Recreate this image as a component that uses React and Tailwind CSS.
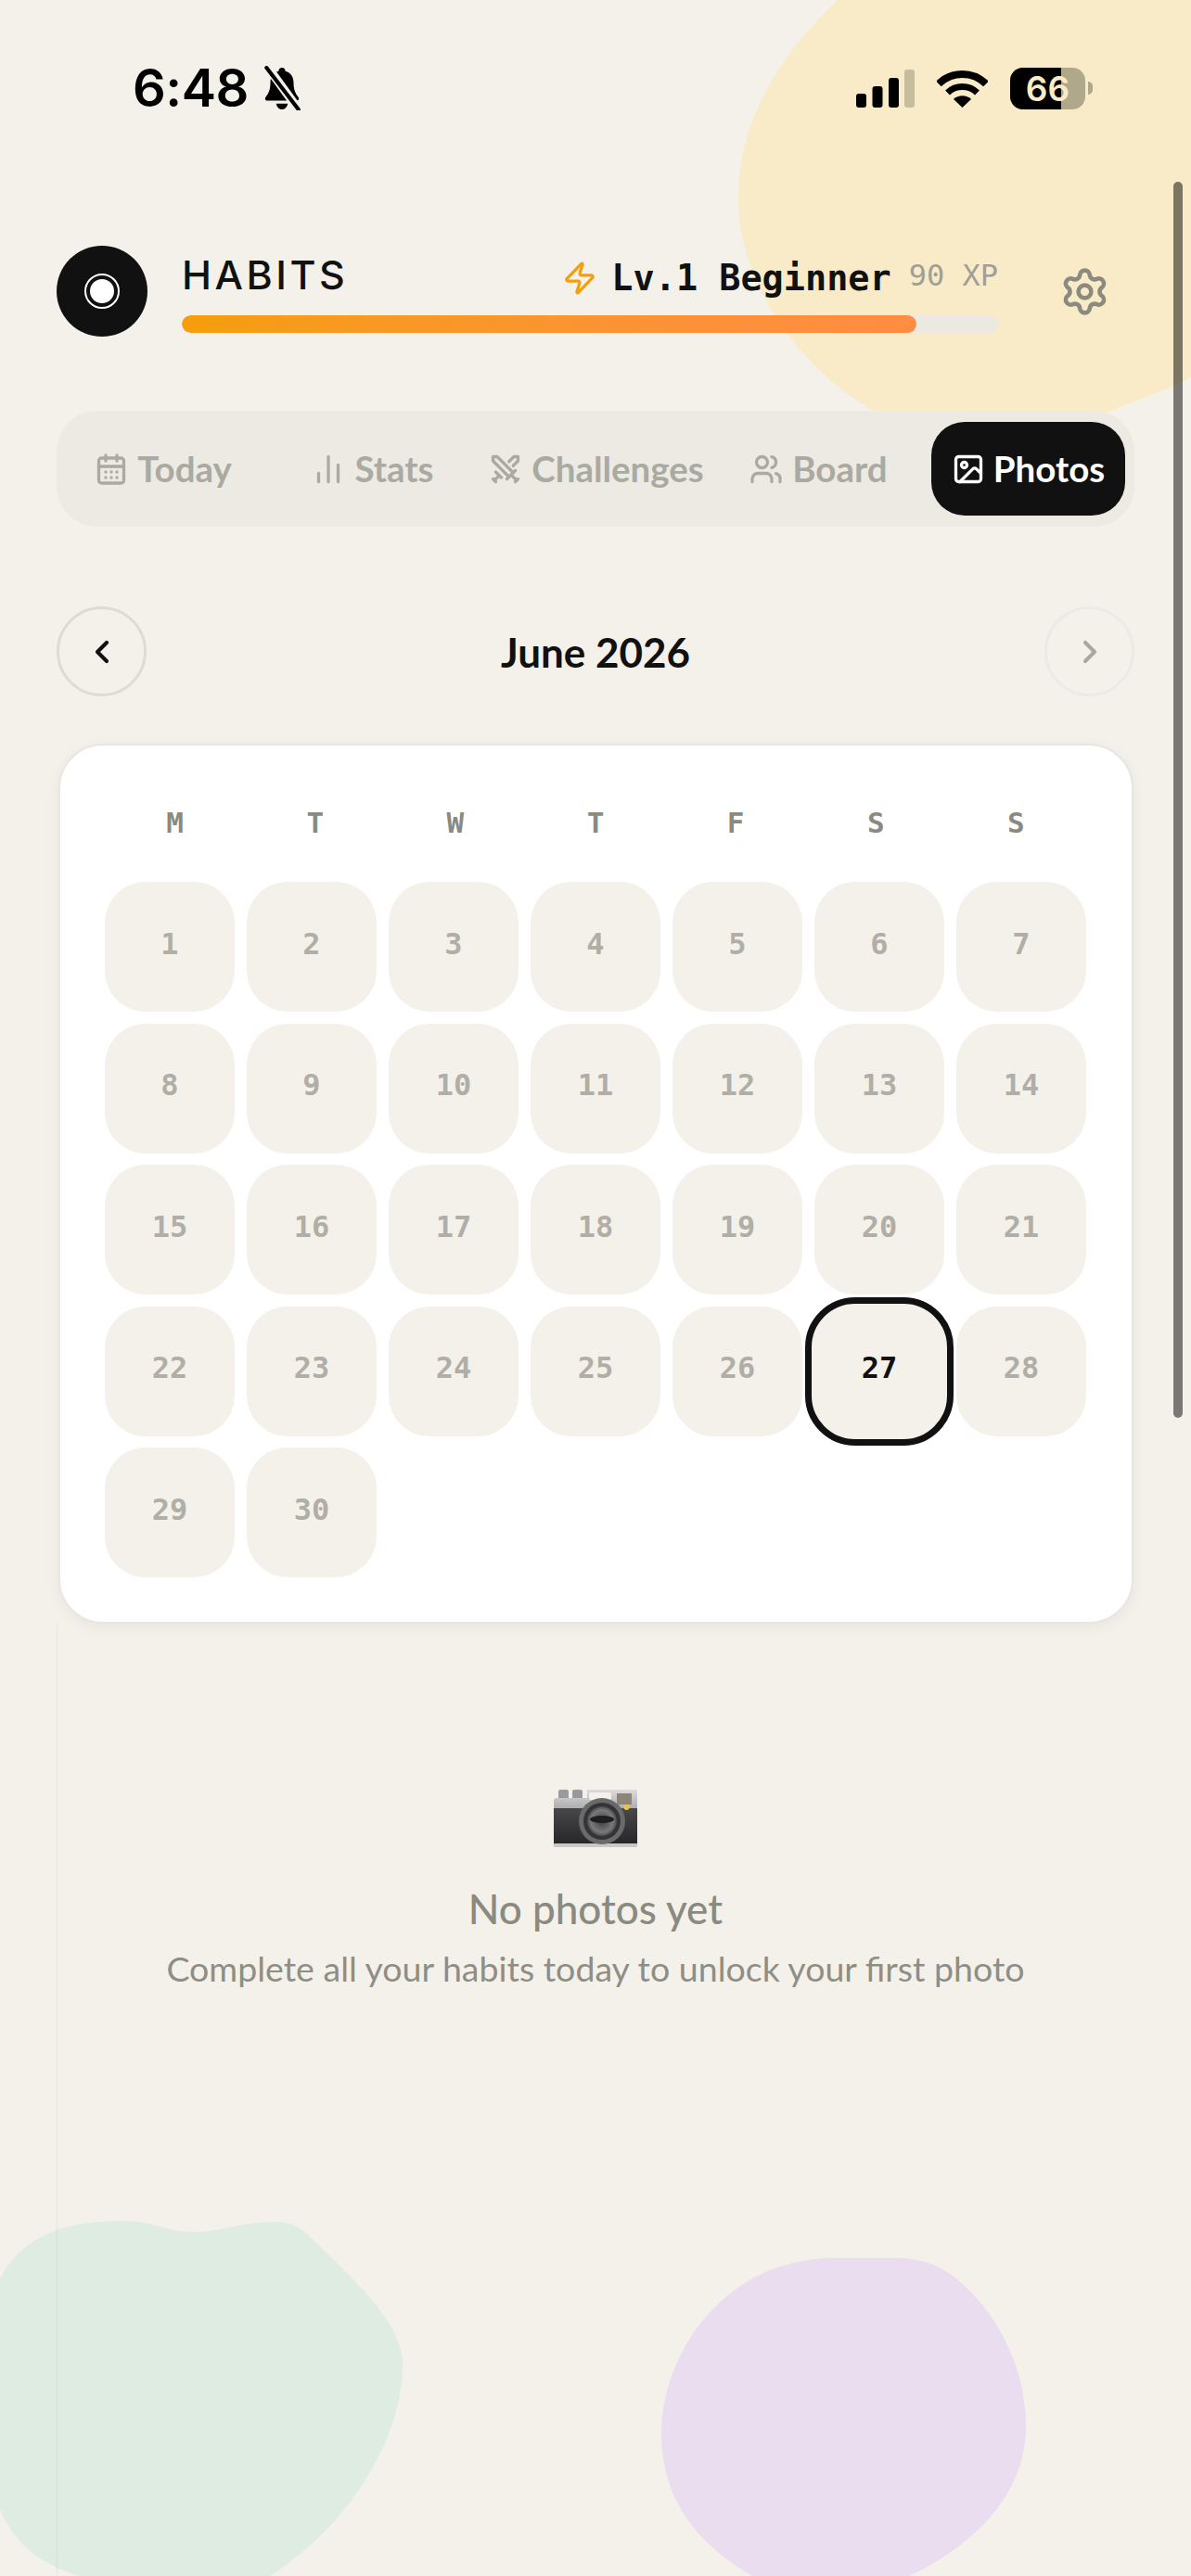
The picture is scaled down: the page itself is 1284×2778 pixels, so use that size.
import { CalendarDays, ChartNoAxesColumn, ChevronLeft, ChevronRight, Image, Settings, Swords, Users, Zap } from "lucide-react";

const nunito = "font-['Lato','Noto_Sans',sans-serif]";
const mono = "font-['DejaVu_Sans_Mono','Liberation_Mono',monospace]";

const tabs = [
  { label: "Today", icon: CalendarDays, width: "w-[206px]" },
  { label: "Stats", icon: ChartNoAxesColumn, width: "w-[246px]" },
  { label: "Challenges", icon: Swords, width: "w-[236px]" },
  { label: "Board", icon: Users, width: "w-[243px]" },
];

const weekdays = ["M", "T", "W", "T", "F", "S", "S"];
const days = Array.from({ length: 30 }, (_, i) => i + 1);

function BellOff() {
  return (
    <svg width="44" height="48" viewBox="0 0 42 46" fill="none">
      <path
        d="M21 2c2 0 3.500 1.500 3.500 3.500 6 1.500 8.500 6.500 8.500 12 0 6 1 10 5 15 1 1.500 0 3.500-2 3.500H6c-2 0-3-2-2-3.500 4-5 5-9 5-15 0-5.500 2.500-10.500 8.500-12C17.500 3.500 19 2 21 2z"
        fill="#000"
      />
      <path d="M15 39h12c-.5 3.500-3 6-6 6s-5.500-2.500-6-6z" fill="#000" />
      <path d="M6 1l32 44" stroke="#f4f1ea" strokeWidth="9" />
      <path d="M5 2l33 43" stroke="#000" strokeWidth="4" strokeLinecap="round" />
    </svg>
  );
}

function SignalIcon() {
  return (
    <svg width="63" height="41" viewBox="0 0 63 41">
      <rect x="0" y="26" width="11" height="15" rx="3" fill="#000" />
      <rect x="17.500" y="18" width="11" height="23" rx="3" fill="#000" />
      <rect x="35" y="9" width="11" height="32" rx="3" fill="#000" />
      <rect x="52" y="0" width="11" height="41" rx="3" fill="#c6bd9f" />
    </svg>
  );
}

function WifiIcon() {
  return (
    <svg width="55" height="41" viewBox="0 0 55 41" fill="none">
      <path d="M2 15.500a36 36 0 0 1 51 0" stroke="#000" strokeWidth="8" />
      <path d="M11.500 25a23 23 0 0 1 32 0" stroke="#000" strokeWidth="7" />
      <path d="M27.500 41L18 32a14 14 0 0 1 19 0z" fill="#000" />
    </svg>
  );
}

function BatteryIcon() {
  return (
    <div className="flex items-center gap-[3px]">
      <div className="relative flex h-[45px] w-[81px] overflow-hidden rounded-[14px] bg-[#b0a88a]">
        <div className="h-full w-[55px] bg-black" />
        <span className="absolute inset-0 flex items-center justify-center font-['Inter',sans-serif] text-[37px] font-semibold leading-none text-[#f9ebc8]">
          66
        </span>
      </div>
      <div className="h-[14px] w-[5px] rounded-r-full bg-[#b0a88a]" />
    </div>
  );
}

function CameraEmoji() {
  return (
    <svg width="90" height="63" viewBox="0 0 90 63">
      <defs>
        <linearGradient id="plate" x1="0" y1="0" x2="0" y2="1">
          <stop offset="0" stopColor="#dcdcde" />
          <stop offset="1" stopColor="#a9a9ad" />
        </linearGradient>
        <linearGradient id="body" x1="0" y1="0" x2="0" y2="1">
          <stop offset="0" stopColor="#48484a" />
          <stop offset="1" stopColor="#262628" />
        </linearGradient>
        <radialGradient id="lens" cx="0.5" cy="0.5" r="0.5">
          <stop offset="0" stopColor="#3c3c3e" />
          <stop offset="0.75" stopColor="#7a7a7c" />
          <stop offset="1" stopColor="#4b4b4d" />
        </radialGradient>
      </defs>
      <rect x="5" y="1" width="11" height="12" rx="2" fill="#9a9a9e" />
      <rect x="20" y="1" width="11" height="12" rx="2" fill="#9a9a9e" />
      <path d="M36 1h52a2 2 0 0 1 2 2v20H0v-10a3 3 0 0 1 3-3h33z" fill="url(#plate)" />
      <rect x="38" y="4" width="24" height="8" rx="2" fill="#f3f1e8" />
      <rect x="68" y="5" width="16" height="12" fill="#8d8578" />
      <rect x="0" y="21" width="90" height="39" fill="url(#body)" />
      <rect x="0" y="59" width="90" height="4" rx="1" fill="#c8c8ca" />
      <circle cx="78.500" cy="20" r="3" fill="#f4c430" />
      <circle cx="52" cy="35" r="25" fill="#6a6a6c" />
      <circle cx="52" cy="35" r="20" fill="#343436" />
      <circle cx="52" cy="35" r="16" fill="url(#lens)" />
      <ellipse cx="52" cy="33" rx="13" ry="4" fill="#1f1f21" />
    </svg>
  );
}

export default function App() {
  return (
    <div className={`relative h-[2778px] w-[1284px] overflow-hidden bg-[#f4f1ea] ${nunito}`}>
      {/* background blobs */}
      <svg className="absolute left-0 top-0" width="1284" height="2778" viewBox="0 0 1284 2778">
        <path
          d="M903 0C840 60 796 130 796 213C796 320 880 410 943 443C990 470 1140 470 1197 443C1230 430 1260 420 1284 407L1284 0Z"
          fill="#f9ebc8"
        />
        <path
          d="M0 2457C20 2418 60 2395 131 2395C165 2395 180 2407 209 2407C235 2407 265 2396 295 2396C312 2396 322 2400 334 2412C385 2462 434 2505 434 2550C434 2630 375 2725 291 2778L86 2778C40 2765 15 2740 0 2707Z"
          fill="#dfece2"
        />
        <path
          d="M713 2623C713 2540 780 2435 900 2435L960 2435C1000 2435 1020 2445 1045 2470C1085 2510 1106 2565 1106 2617C1106 2690 1050 2745 980 2778L811 2778C755 2745 713 2700 713 2623Z"
          fill="#eaddef"
        />
      </svg>

      {/* faint rail under the card */}
      <div className="absolute bottom-0 left-[60px] top-[1750px] w-[3px] bg-black/[0.02]" />

      <div className="relative">
        {/* status bar */}
        <div className="flex h-[190px] items-center justify-between pl-[143px] pr-[106px]">
          <div className="flex items-center gap-[14px]">
            <span className="font-['Inter',sans-serif] text-[56px] font-semibold leading-none tracking-[-0.500px] text-black">6:48</span>
            <BellOff />
          </div>
          <div className="flex items-center gap-[24px]">
            <SignalIcon />
            <WifiIcon />
            <BatteryIcon />
          </div>
        </div>

        {/* header */}
        <div className="mt-[75px] flex pl-[61px]">
          <div className="flex h-[98px] w-[98px] items-center justify-center rounded-full bg-[#111111]">
            <div className="flex h-[38px] w-[38px] items-center justify-center rounded-full border-2 border-white">
              <div className="h-[26px] w-[26px] rounded-full bg-white" />
            </div>
          </div>
          <div className="ml-[37px] w-[880px]">
            <div className="flex h-[75px] items-start justify-between">
              <span className="mt-[7px] font-['Inter',sans-serif] text-[43px] font-medium leading-[48px] tracking-[3.500px] text-[#111111]">HABITS</span>
              <div className={`flex items-center ${mono}`}>
                <Zap size={38} strokeWidth={2} className="mt-[13px] text-[#f59e0b]" />
                <span className="ml-[15px] mt-[13px] text-[38.500px] font-bold leading-[44px] text-[#111111]">Lv.1 Beginner</span>
                <span className="ml-[19px] mt-[6px] text-[32px] leading-[44px] text-[#a09f96]">90 XP</span>
              </div>
            </div>
            <div className="h-[19px] w-full overflow-hidden rounded-full bg-[#ece9e2]">
              <div className="h-full w-[792px] rounded-full bg-gradient-to-r from-[#f59e0b] to-[#ff8c42]" />
            </div>
          </div>
          <Settings size={55} strokeWidth={2} className="ml-[66px] mt-[22px] text-[#8a8a7e]" />
        </div>

        {/* tabs */}
        <div className="ml-[61px] mt-[80px] flex h-[125px] w-[1162px] items-center rounded-[44px] bg-[#edeae3] pl-[12px]">
          {tabs.map((tab) => (
            <div key={tab.label} className={`flex items-center justify-center gap-[10px] text-[#abaaa2] ${tab.width}`}>
              <tab.icon size={36} strokeWidth={2.200} />
              <span className="text-[38.500px] font-bold leading-none">{tab.label}</span>
            </div>
          ))}
          <div className="flex h-[101px] w-[209px] items-center justify-center gap-[9px] rounded-[36px] bg-[#111111] text-white">
            <Image size={36} strokeWidth={2.200} />
            <span className="text-[38.500px] font-bold leading-none">Photos</span>
          </div>
        </div>

        {/* month nav */}
        <div className="mt-[86px] flex items-center justify-between px-[61px]">
          <button className="flex h-[97px] w-[97px] items-center justify-center rounded-full border-[3px] border-[#dedbd5] text-[#111111]">
            <ChevronLeft size={40} strokeWidth={2.500} />
          </button>
          <span className="text-[44px] font-bold leading-none text-[#111111]">June 2026</span>
          <button className="flex h-[97px] w-[97px] items-center justify-center rounded-full border-[3px] border-[#eceae5] text-[#aaa9a1]">
            <ChevronRight size={40} strokeWidth={2.500} />
          </button>
        </div>

        {/* calendar */}
        <div className={`ml-[63px] mt-[51px] w-[1159px] rounded-[48px] border-2 border-[#e8e6e3] bg-white pb-[48px] pl-[48px] pr-[49px] pt-[63px] shadow-[0_4px_16px_rgba(0,0,0,0.05)] ${mono}`}>
          <div className="grid h-[40px] grid-cols-7 items-center">
            {weekdays.map((day, i) => (
              <span key={i} className="text-center text-[31px] font-bold leading-none text-[#8a8a80]">{day}</span>
            ))}
          </div>
          <div className="mt-[44px] grid grid-cols-7 gap-x-[13px] gap-y-[12.500px]">
            {days.map((day) => (
              <div key={day} className="relative flex h-[140px] items-center justify-center rounded-[44px] bg-[#f4f1ea] pb-[7px] text-[32px] font-bold leading-none text-[#b0aea6]">
                {day === 27 ? (
                  <div className="absolute -inset-[10px] flex items-center justify-center rounded-[54px] border-[7px] border-[#111111] bg-[#f4f1ea] pb-[7px] text-[#111111]">
                    27
                  </div>
                ) : (
                  day
                )}
              </div>
            ))}
          </div>
        </div>

        {/* empty state */}
        <div className="mt-[178px] flex flex-col items-center">
          <CameraEmoji />
          <span className="mt-[41px] text-[44px] font-medium leading-[50px] text-[#8a8a80]">No photos yet</span>
          <span className="mt-[18px] text-[37.500px] leading-[44px] text-[#8f8e86]">Complete all your habits today to unlock your first photo</span>
        </div>
      </div>

      {/* scrollbar */}
      <div className="absolute left-[1265px] top-[196px] h-[1333px] w-[10px] rounded-full bg-black/50" />
    </div>
  );
}
